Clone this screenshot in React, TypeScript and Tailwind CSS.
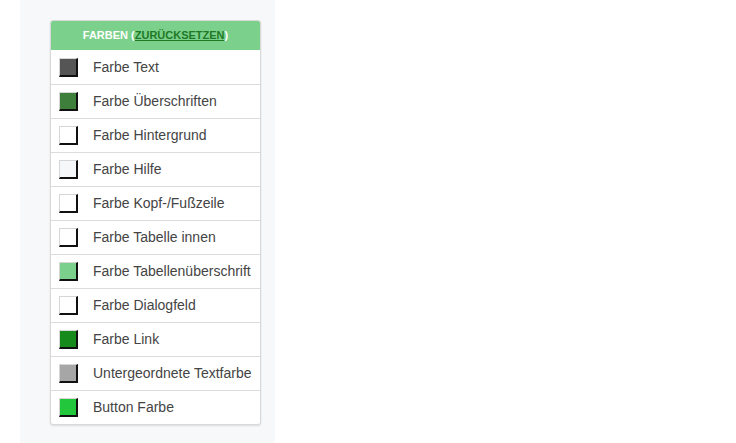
const colors = [
  { label: 'Farbe Text', color: 'bg-[#555555]' },
  { label: 'Farbe Überschriften', color: 'bg-[#3f7f3c]' },
  { label: 'Farbe Hintergrund', color: 'bg-white' },
  { label: 'Farbe Hilfe', color: 'bg-[#f6f7f8]' },
  { label: 'Farbe Kopf-/Fußzeile', color: 'bg-white' },
  { label: 'Farbe Tabelle innen', color: 'bg-white' },
  { label: 'Farbe Tabellenüberschrift', color: 'bg-[#7bd08b]' },
  { label: 'Farbe Dialogfeld', color: 'bg-white' },
  { label: 'Farbe Link', color: 'bg-[#178a1c]' },
  { label: 'Untergeordnete Textfarbe', color: 'bg-[#a6a6a6]' },
  { label: 'Button Farbe', color: 'bg-[#23c73c]' },
];

export default function App() {
  return (
    <main className="min-h-screen w-[736px] h-[443px] bg-white flex font-['Liberation_Sans',Arial,sans-serif]">
      <aside className="ml-5 w-[255px] h-[443px] bg-[#f7f8fa] pl-[30px] pt-5">
        <div className="w-[211px] bg-white rounded-[3px] border border-[#d9d9d9] shadow-[0_1px_2px_rgba(0,0,0,0.12)] overflow-hidden">
          <div className="h-[29px] bg-[#7bd08b] flex items-center justify-center text-[11px] font-bold uppercase text-white">
            <span>Farben (</span>
            <a href="#" className="text-[#1f7a26] underline">Zurücksetzen</a>
            <span>)</span>
          </div>
          {colors.map((c, i) => (
            <div key={c.label} className={'h-[34px] flex items-center ' + (i > 0 ? 'border-t border-[#dcdcdc]' : '')}>
              <div className={'ml-2 w-[19px] h-[19px] border-t border-l border-[#d6d6d6] border-b-2 border-r-2 border-b-[#111] border-r-[#111] ' + c.color} />
              <span className="ml-[15px] text-[14px] text-[#444]">{c.label}</span>
            </div>
          ))}
        </div>
      </aside>
    </main>
  );
}
